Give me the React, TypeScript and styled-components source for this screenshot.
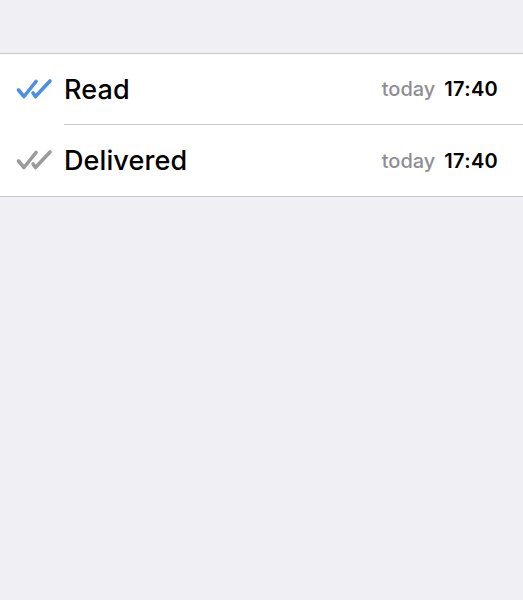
import React from "react";
import styled, { createGlobalStyle } from "styled-components";

const GlobalStyle = createGlobalStyle`
  html, body {
    margin: 0;
    padding: 0;
    background: #efeff4;
  }
  body {
    font-family: Inter, "Noto Sans", sans-serif;
    -webkit-font-smoothing: antialiased;
  }
`;

const Page = styled.div`
  min-height: 600px;
  box-sizing: border-box;
  padding-top: 53px;
  background: #efeff4;
`;

const List = styled.div`
  background: #ffffff;
  border-top: 1px solid #c8c7cc;
  border-bottom: 1px solid #c8c7cc;
`;

const Row = styled.div`
  display: flex;
  align-items: center;
  height: 71px;
`;

const IconCell = styled.div`
  width: 64px;
  display: flex;
  align-items: center;
  padding-left: 16px;
  box-sizing: border-box;
`;

const Body = styled.div<{ $divider: boolean }>`
  flex: 1;
  height: 100%;
  display: flex;
  align-items: center;
  padding-right: 25px;
  border-bottom: ${(p) => (p.$divider ? "1px solid #c8c7cc" : "none")};
  box-sizing: border-box;
`;

const Title = styled.span`
  flex: 1;
  font-size: 27px;
  font-weight: 500;
  color: #000;
  letter-spacing: 0.1px;
`;

const Day = styled.span`
  font-size: 20px;
  font-weight: 500;
  color: #8e8e93;
  margin-right: 9px;
`;

const Time = styled.span`
  font-size: 20px;
  font-weight: 600;
  color: #000;
  letter-spacing: 0.3px;
`;

const DoubleCheck = ({ color }: { color: string }) => (
  <svg width="38" height="24" viewBox="0 0 38 24">
    <g
      fill="none"
      stroke={color}
      strokeWidth="3.6"
      strokeLinecap="round"
      strokeLinejoin="round"
    >
      <path d="M2.5 12 L8 18.5 L20 3.5" />
      <path d="M17 15 L19.5 18.5 L34 3" />
    </g>
  </svg>
);

type Receipt = { label: string; color: string };

const receipts: Receipt[] = [
  { label: "Read", color: "#4a90e6" },
  { label: "Delivered", color: "#9b9b9b" },
];

export default function App() {
  return (
    <Page>
      <GlobalStyle />
      <List>
        {receipts.map((r, i) => (
          <Row key={r.label}>
            <IconCell>
              <DoubleCheck color={r.color} />
            </IconCell>
            <Body $divider={i < receipts.length - 1}>
              <Title>{r.label}</Title>
              <Day>today</Day>
              <Time>17:40</Time>
            </Body>
          </Row>
        ))}
      </List>
    </Page>
  );
}
